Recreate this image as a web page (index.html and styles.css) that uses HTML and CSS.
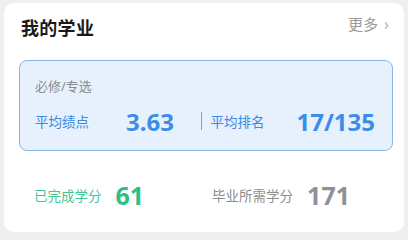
FILE: index.html
```html
<!DOCTYPE html>
<html lang="zh">
<head>
<meta charset="utf-8">
<link rel="stylesheet" href="styles.css">
</head>
<body>
<div class="card">
  <div class="header">
    <h1 class="title">我的学业</h1>
    <a class="more">更多<span class="chev">›</span></a>
  </div>
  <div class="gpa-box">
    <div class="label">必修/专选</div>
    <div class="gpa-row">
      <div class="stat">
        <span class="stat-name">平均绩点</span>
        <span class="stat-val">3.63</span>
      </div>
      <span class="sep"></span>
      <div class="stat stat-right">
        <span class="stat-name">平均排名</span>
        <span class="stat-val">17/135</span>
      </div>
    </div>
  </div>
  <div class="credits">
    <div class="credit done">
      <span class="credit-name">已完成学分</span>
      <span class="credit-val">61</span>
    </div>
    <div class="credit need">
      <span class="credit-name">毕业所需学分</span>
      <span class="credit-val">171</span>
    </div>
  </div>
</div>
</body>
</html>
```
FILE: styles.css
```css
* { box-sizing: border-box; }
html, body { margin: 0; padding: 0; }
body {
  background: #efefef;
  width: 408px;
  height: 240px;
  font-family: "Noto Sans", "Noto Sans CJK SC", sans-serif;
  padding: 3px 4px 0 4px;
  white-space: nowrap;
}
.card {
  background: #fff;
  border-radius: 10px;
  height: 229px;
  padding: 0 11px 0 15px;
}
.header {
  display: flex;
  justify-content: space-between;
  align-items: center;
  height: 47px;
  padding-left: 2px;
}
.title {
  margin: 0;
  font-size: 18px;
  font-weight: 700;
  color: #1a1a1a;
  letter-spacing: 0.3px;
}
.more {
  font-size: 15px;
  color: #9a9a9a;
  display: flex;
  align-items: center;
  margin-top: -6px;
  margin-right: 4px;
}
.chev {
  margin-left: 6px;
  font-size: 16px;
  color: #b0b0b0;
}
.gpa-box {
  margin-top: 10px;
  width: 374px;
  height: 91px;
  border: 1px solid #86b6ea;
  border-radius: 8px;
  background: #e6f1fd;
  padding: 16px 15px 0 15px;
}
.label {
  font-size: 13px;
  color: #8b8b8b;
  line-height: 18px;
}
.gpa-row {
  display: flex;
  align-items: center;
  margin-top: 11px;
  height: 30px;
}
.stat {
  display: flex;
  align-items: center;
  flex-shrink: 0;
}
.stat-name {
  font-size: 13.5px;
  color: #3a8ae2;
  flex-shrink: 0;
}
.stat-val {
  font-size: 24px;
  font-weight: 700;
  color: #3b8de6;
  margin-left: 37px;
  flex-shrink: 0;
}
.sep {
  width: 1.5px;
  height: 18px;
  background: #6fa6e6;
  margin: 0 8px 0 27px;
  flex-shrink: 0;
}
.stat-right .stat-val { margin-left: 32px; }
.credits {
  display: flex;
  align-items: center;
  margin-top: 27px;
  padding-left: 15px;
}
.credit {
  display: flex;
  align-items: center;
}
.credit-name {
  font-size: 13.5px;
}
.credit-val {
  font-size: 25px;
  font-weight: 700;
  margin-left: 14px;
}
.done .credit-name { color: #48c493; }
.done .credit-val { color: #2ebf83; }
.need { margin-left: 68px; }
.need .credit-name { color: #8c8c8c; }
.need .credit-val { color: #8d9199; }
```
